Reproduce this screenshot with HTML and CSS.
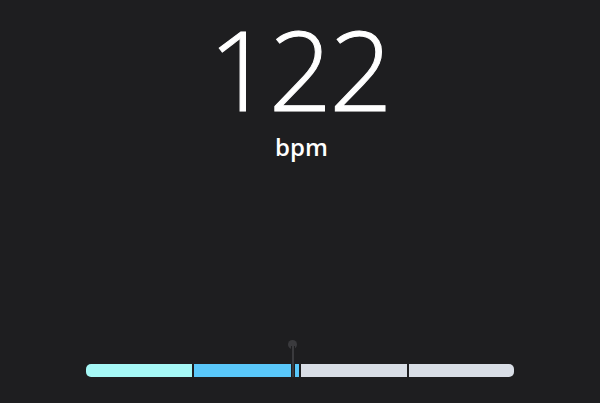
FILE: index.html
```html
<!DOCTYPE html>
<html lang="en">
<head>
    <meta charset="UTF-8">
    <meta name="viewport" content="width=device-width, initial-scale=1.0">
    <title>Heart Rate</title>
    <link rel="stylesheet" href="styles.css">
</head>
<body>

    <main class="screen">
        <div class="reading">
            <div class="bpm-value">122</div>
            <div class="bpm-unit">bpm</div>
        </div>

        <div class="zone-meter">
            <div class="zones">
                <div class="zone zone-rest"></div>
                <div class="zone zone-fat"></div>
                <div class="zone zone-cardio"></div>
                <div class="zone zone-peak"></div>
            </div>
            <!-- current heart rate position -->
            <div class="marker" style="left: 48.3%">
                <span class="marker-dot"></span>
                <span class="marker-stick"></span>
            </div>
        </div>
    </main>

</body>
</html>
```

FILE: styles.css
```css
/* Basic styling */
body {
    margin: 0;
    background-color: #1e1e20;
    font-family: "Open Sans", sans-serif;
    color: #ffffff;
}

.screen {
    height: 403px;
    box-sizing: border-box;
    display: flex;
    flex-direction: column;
    align-items: center;
    padding: 13px 0 26px;
}

.reading {
    display: flex;
    flex-direction: column;
    align-items: center;
}

.bpm-value {
    font-size: 111px;
    font-weight: 300;
    line-height: 111px;
    letter-spacing: -3px;
    padding-right: 2px;
    -webkit-text-stroke: 1px #ffffff;
}

.bpm-unit {
    font-size: 24px;
    font-weight: 600;
    margin-top: 6px;
    padding-left: 3px;
}

.zone-meter {
    position: relative;
    margin-top: auto;
    width: 428px;
}

.zones {
    display: grid;
    grid-template-columns: repeat(4, 1fr);
    gap: 2px;
    height: 13px;
    border-radius: 5px;
    overflow: hidden;
}

.zone-rest {
    background-color: #a6f8f6;
}

.zone-fat {
    background-color: #5ac8fa;
}

.zone-cardio,
.zone-peak {
    background-color: #d9dee6;
}

.marker {
    position: absolute;
    bottom: 0;
    width: 10px;
    margin-left: -5px;
    display: flex;
    flex-direction: column;
    align-items: center;
}

.marker-dot {
    width: 9px;
    height: 9px;
    border-radius: 50%;
    background-color: #3a3a3d;
}

.marker-stick {
    width: 2px;
    height: 31px;
    margin-top: -3px;
    background-color: #3a3a3d;
    border-left: 1px solid #1e1e20;
    border-right: 1px solid #1e1e20;
}
```
